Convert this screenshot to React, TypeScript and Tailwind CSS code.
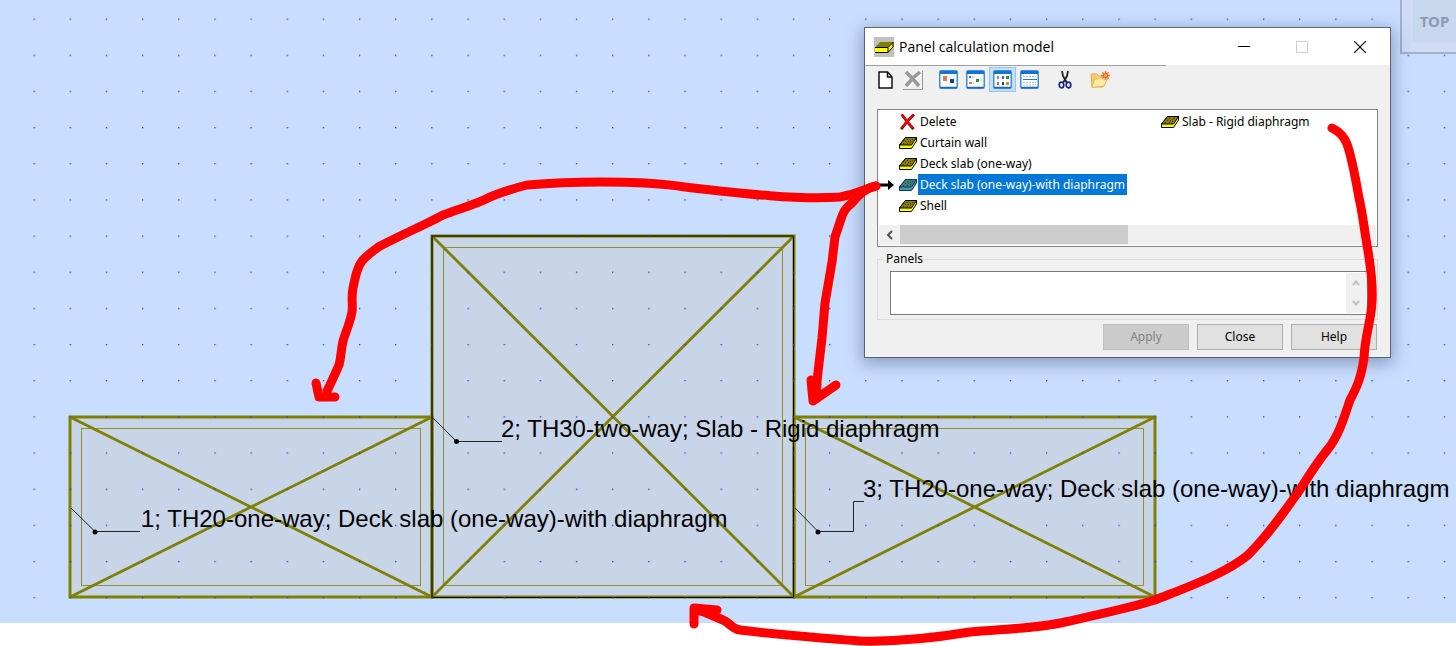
import React, { useState } from "react";
import clsx from "clsx";

type ModelItem = {
  name: string;
  kind: "delete" | "slab";
};

const columns: ModelItem[][] = [
  [
    { name: "Delete", kind: "delete" },
    { name: "Curtain wall", kind: "slab" },
    { name: "Deck slab (one-way)", kind: "slab" },
    { name: "Deck slab (one-way)-with diaphragm", kind: "slab" },
    { name: "Shell", kind: "slab" },
  ],
  [{ name: "Slab - Rigid diaphragm", kind: "slab" }],
];

const panels = [
  { x: 70, y: 417, w: 362, h: 180 },
  { x: 794, y: 417, w: 361, h: 180 },
  { x: 432, y: 236, w: 362, h: 361 },
];

const labels = [
  {
    text: "1; TH20-one-way; Deck slab (one-way)-with diaphragm",
    x: 141,
    y: 527,
    leader: "71,508 95,531.5 140,531.5",
    dot: [95, 532],
  },
  {
    text: "2; TH30-two-way; Slab - Rigid diaphragm",
    x: 501,
    y: 437,
    leader: "432,417 456.5,441.5 502,441.5",
    dot: [456.5, 441.5],
  },
  {
    text: "3; TH20-one-way; Deck slab (one-way)-with diaphragm",
    x: 863,
    y: 497,
    leader: "795,508 818,531.5 853.5,531.5 853.5,501.5 864,501.5",
    dot: [818, 532],
  },
];

const SlabIcon = ({ selected }: { selected?: boolean }) => (
  <svg width="18" height="12" viewBox="0 0 18 12" className="shrink-0">
    <path
      d="M6.500 .5h11v3.500l-5 7.500h-12v-3.500z"
      fill={selected ? "#4a98a0" : "#ffff00"}
      stroke={selected ? "#0b3a66" : "#000"}
    />
    <path
      d="M6.500 .5h11l-5 7.500h-12z"
      fill={selected ? "#407c72" : "#808000"}
      stroke={selected ? "#0b3a66" : "#000"}
    />
    <g fill={selected ? "#1d5060" : "#9a1500"} shapeRendering="crispEdges">
      <path d="M8 2h1v1h-1zM11 3h1v1h-1zM13 2h1v1h-1zM6 4h1v1h-1zM9 4h1v1h-1zM11 5h1v1h-1zM4 6h1v1h-1zM8 6h1v1h-1z" />
    </g>
  </svg>
);

const DeleteIcon = () => (
  <svg width="18" height="16" viewBox="0 0 18 16" className="shrink-0">
    <g fill="none" strokeLinecap="square">
      <path d="M3.500 1.500l4.500 6 5.500 6.500M14 1.500l-5 5-6 7.500" stroke="#800000" strokeWidth="2.800" />
      <path d="M3.500 1.500l4 5 5.500 6.500M13.500 1.500l-5 5-5 6.500" stroke="#ff0000" strokeWidth="1.600" />
    </g>
  </svg>
);

const TitleIcon = () => (
  <svg width="20" height="20" viewBox="0 0 20 20" className="shrink-0">
    <path d="M0 0h20v20h-20z" fill="#c0c0c0" />
    <path d="M6 5h13v5l-5 5.500h-13v-4.500z" fill="#ffff00" />
    <path d="M6 5h13l-5 5.500h-13z" fill="#808000" />
    <path d="M1 10.500h13l5-5M14 10.500v5" fill="none" stroke="#000" />
    <path d="M1 15.500h13l5-5.500v-5" fill="none" stroke="#000" />
  </svg>
);

const NewIcon = () => (
  <svg width="15" height="18" viewBox="0 0 15 18">
    <path d="M1 1h8.500l4.500 5v11h-13z" fill="#fff" stroke="#111" strokeWidth="1.500" />
    <path d="M9.500 1v5h4.500" fill="none" stroke="#111" strokeWidth="1.500" />
  </svg>
);

const ClearIcon = () => (
  <svg width="20" height="20" viewBox="0 0 20 20">
    <path d="M4 3l12 13M17 2.500l-6 6-8 8" stroke="#fff" strokeWidth="3" transform="translate(1 1)" />
    <path d="M3 2l6 6 7 8M17 2l-7 6-7 8" fill="none" stroke="#999" strokeWidth="3.500" />
    <path d="M0 19.500h19.500v-19" fill="none" stroke="#999" />
  </svg>
);

const ViewIcon = ({ children }: { children: React.ReactNode }) => (
  <svg width="19" height="19" viewBox="0 0 19 19">
    <rect x=".75" y=".75" width="17.500" height="17.500" rx="1.500" fill="#fff" stroke="#3b8ee0" strokeWidth="1.500" />
    <path d="M1 1h17v3h-17z" fill="#1672d0" />
    {children}
    <path d="M1 17.500h17" stroke="#1d66bb" strokeWidth="1.500" />
  </svg>
);

const ScissorsIcon = () => (
  <svg width="14" height="18" viewBox="0 0 14 18">
    <path d="M4 0l1 5 4 7M10 0l-1 5-4 7" fill="none" stroke="#222" strokeWidth="1.800" />
    <g fill="none" stroke="#20208c" strokeWidth="1.700">
      <ellipse cx="3.500" cy="14" rx="2.300" ry="2.800" />
      <ellipse cx="10.500" cy="14" rx="2.300" ry="2.800" />
    </g>
  </svg>
);

const FolderIcon = () => (
  <svg width="20" height="18" viewBox="0 0 20 18">
    <path d="M1 3h6l2 2h7v3l-3 8h-11z" fill="#f3cf70" stroke="#e0ae40" />
    <path d="M4.500 8h4l1.500-1.500h8l-4 8.500-12 1.500z" fill="#ffe9a5" stroke="#e6b750" />
    <path d="M15.500 0v9M11 4.500h9M12.300 1.300l6.400 6.400M18.700 1.300l-6.400 6.400" stroke="#f47a3a" strokeWidth="1.500" />
    <circle cx="15.500" cy="4.500" r="2" fill="#ffb35c" stroke="#f05a1a" />
  </svg>
);

const ToolButton = ({
  label,
  active,
  className,
  children,
}: {
  label: string;
  active?: boolean;
  className?: string;
  children: React.ReactNode;
}) => (
  <button
    aria-label={label}
    className={clsx(
      "flex h-[25px] w-[27px] items-center justify-center border",
      active ? "border-[#90c8f6] bg-[#c5def3]" : "border-transparent",
      className
    )}
  >
    {children}
  </button>
);

const Toolbar = () => (
  <div className="flex px-[7px] pt-px">
    <ToolButton label="New">
      <NewIcon />
    </ToolButton>
    <ToolButton label="Clear">
      <ClearIcon />
    </ToolButton>
    <ToolButton label="Large icons" className="ml-[9px]">
      <ViewIcon>
        <path d="M4 6h4v5h-4z" fill="#ee7440" />
        <path d="M11 9h4v4h-4z" fill="#123f9c" />
      </ViewIcon>
    </ToolButton>
    <ToolButton label="Small icons">
      <ViewIcon>
        <path d="M3 6h2v2h-2z" fill="#2f80e0" />
        <path d="M10 9h3v3h-3z" fill="#229a33" />
        <path d="M3 12h3v2h-3z" fill="#ee7440" />
        <path d="M6 7h3M14 10h2M7 13h2" stroke="#b7c2ce" />
      </ViewIcon>
    </ToolButton>
    <ToolButton label="List" active>
      <ViewIcon>
        <path d="M4 6h2v3h-2z" fill="#6f8fb4" />
        <path d="M9 6h2v3h-2z" fill="#5a4cc4" />
        <path d="M13 6h3v3h-3z" fill="#229a33" />
        <path d="M4 12h2v3h-2z" fill="#ee6330" />
        <path d="M9 12h2v3h-2z" fill="#123f9c" />
        <path d="M13 12h3v3h-3z" fill="#c79718" />
      </ViewIcon>
    </ToolButton>
    <ToolButton label="Details">
      <ViewIcon>
        <path d="M3 9.500h14" stroke="#1f78d0" />
        <path d="M3 6.500h13M3 12.500h13M3 15h13" stroke="#a9bdd2" strokeDasharray="2 1" />
      </ViewIcon>
    </ToolButton>
    <ToolButton label="Cut" className="ml-2">
      <ScissorsIcon />
    </ToolButton>
    <ToolButton label="Open" className="ml-2">
      <FolderIcon />
    </ToolButton>
  </div>
);

const ModelList = () => {
  const [selected, setSelected] = useState("Deck slab (one-way)-with diaphragm");

  return (
    <div className="border border-[#828790] bg-white p-px">
      <div className="flex h-[114px] overflow-hidden">
        {columns.map((items, i) => (
          <ul key={i} className="w-[262px] shrink-0">
            {items.map(({ name, kind }) => (
              <li key={name}>
                <button
                  className="flex h-[21px] items-center whitespace-nowrap"
                  onClick={() => setSelected(name)}
                >
                  <span className="flex w-5 shrink-0">
                    {selected === name && (
                      <svg width="16" height="12" viewBox="0 0 16 12">
                        <path d="M1 4.500h8v-3.500l6 5-6 5v-3.500h-8z" fill="#000" />
                      </svg>
                    )}
                  </span>
                  {kind === "delete" ? (
                    <DeleteIcon />
                  ) : (
                    <SlabIcon selected={selected === name} />
                  )}
                  <span
                    className={clsx(
                      "ml-px h-[21px] px-0.5 leading-[21px]",
                      selected === name && "bg-[#0078d7] text-white"
                    )}
                  >
                    {name}
                  </span>
                </button>
              </li>
            ))}
          </ul>
        ))}
      </div>
      <div className="flex h-5 bg-[#f0f0f0]">
        <button aria-label="Scroll left" className="flex w-[21px] items-center justify-center">
          <svg width="8" height="10" viewBox="0 0 8 10">
            <path d="M6 1l-4 4 4 4" fill="none" stroke="#505050" strokeWidth="2" />
          </svg>
        </button>
        <div className="h-[19px] w-[228px] bg-[#cdcdcd]" />
      </div>
    </div>
  );
};

const Dialog = () => (
  <section
    aria-labelledby="dialog-title"
    className="absolute top-[27px] right-[65px] w-[527px] border border-[#5c6472] bg-[#f0f0f0] pb-[7px] font-['Noto_Sans',sans-serif] text-[12px] text-black shadow-[0_4px_16px_2px_rgba(40,60,100,0.4)]"
  >
    <header className="flex h-[37px] items-center bg-white pr-px pl-[9px]">
      <TitleIcon />
      <h1 id="dialog-title" className="ml-[5px] flex-1 font-['Open_Sans',sans-serif] text-[14px]">
        Panel calculation model
      </h1>
      <button aria-label="Minimize" className="flex h-full w-[58px] items-center justify-center">
        <svg width="12" height="12" viewBox="0 0 12 12">
          <path d="M0 5.500h12" stroke="#000" />
        </svg>
      </button>
      <button
        aria-label="Maximize"
        disabled
        className="flex h-full w-[58px] items-center justify-center"
      >
        <svg width="12" height="12" viewBox="0 0 12 12">
          <path d="M.5.5h11v11h-11z" fill="none" stroke="#ccc" />
        </svg>
      </button>
      <button aria-label="Close window" className="flex h-full w-[58px] items-center justify-center">
        <svg width="12" height="12" viewBox="0 0 12 12">
          <path d="M0 0l12 12M12 0l-12 12" stroke="#000" strokeWidth="1.200" />
        </svg>
      </button>
    </header>
    <div className="h-px w-[301px] bg-[#a0a0a0]" />
    <Toolbar />
    <div className="px-3 pt-[17px]">
      <ModelList />
      <fieldset className="mt-1 border border-[#dcdcdc] pt-1 pr-[9px] pb-1 pl-3">
        <legend className="-ml-1.5 px-0.5 leading-4">
          <label htmlFor="panels">Panels</label>
        </legend>
        <div className="flex h-11 border border-[#7a7a7a] bg-white p-px">
          <textarea id="panels" className="block flex-1 resize-none outline-none" />
          <div className="flex w-5 flex-col bg-[#f0f0f0]">
            <button aria-label="Scroll up" className="flex flex-1 items-center justify-center">
              <svg width="8" height="6" viewBox="0 0 8 6">
                <path d="M1 5l3-3.500 3 3.500" fill="none" stroke="#bfbfbf" strokeWidth="2" />
              </svg>
            </button>
            <button aria-label="Scroll down" className="flex flex-1 items-center justify-center">
              <svg width="8" height="6" viewBox="0 0 8 6">
                <path d="M1 1l3 3.500 3-3.500" fill="none" stroke="#bfbfbf" strokeWidth="2" />
              </svg>
            </button>
          </div>
        </div>
      </fieldset>
      <div className="mt-1 flex justify-end gap-2 pr-px">
        <button
          disabled
          className="h-[26px] w-[86px] border border-[#bfbfbf] bg-[#cccccc] text-[#838383]"
        >
          Apply
        </button>
        <button className="h-[26px] w-[86px] border border-[#adadad] bg-[#e1e1e1]">Close</button>
        <button className="h-[26px] w-[86px] border border-[#adadad] bg-[#e1e1e1]">Help</button>
      </div>
    </div>
  </section>
);

const Drawing = () => (
  <svg className="absolute inset-0 h-full w-full">
    <defs>
      <pattern id="grid" x="33.500" y="18.500" width="36.160" height="36.160" patternUnits="userSpaceOnUse">
        <rect width="1.300" height="1.300" fill="#3030e8" />
      </pattern>
    </defs>
    {panels.map(({ x, y, w, h }) => (
      <rect key={x} x={x} y={y} width={w} height={h} fill="#c8d4e7" />
    ))}
    {panels.map(({ x, y, w, h }) => (
      <g key={x} fill="none" stroke="#808000">
        <rect x={x} y={y} width={w} height={h} strokeWidth="3" />
        <path d={`M${x} ${y}l${w} ${h}M${x + w} ${y}l${-w} ${h}`} strokeWidth="2.800" />
        <rect x={x + 11.5} y={y + 11.5} width={w - 23} height={h - 23} strokeOpacity=".8" />
      </g>
    ))}
    <path d="M432 598v-362h362" fill="none" stroke="#2b2b00" strokeWidth="1.600" />
    <path d="M432 597.500h361.500v-361" fill="none" stroke="#000" />
    <rect width="100%" height="100%" fill="url(#grid)" />
    {labels.map(({ text, x, y, leader, dot }) => (
      <g key={text}>
        <polyline points={leader} fill="none" stroke="#222" />
        <circle cx={dot[0]} cy={dot[1]} r="2.500" />
        <text x={x} y={y} className="font-['Liberation_Sans',sans-serif] text-[24px]">
          {text}
        </text>
      </g>
    ))}
  </svg>
);

// Freehand arrows from the list entries to the panels they are assigned to
const Markup = () => (
  <svg className="pointer-events-none absolute inset-0 h-full w-full">
    <g fill="none" stroke="#ff0000" strokeWidth="9" strokeLinecap="round" strokeLinejoin="round">
      <path d="M876 186C860 190 858 194 840 197C800 200 745 194 685 187C655 182 625 182 600 182C575 182 550 183 527 185C515 188 500 193 490 197C475 205 458 209 443 215C430 222 425 224 417 228C404 234 392 240 380 246C373 251 367 255 362 261C356 269 355 279 353 288C351 297 353 304 352 312C350 323 346 331 343 341C341 350 341 358 339 365C335 374 332 381 327 391" />
      <path d="M316 383L319 397H335" />
      <path d="M876 186C866 188 860 193 852 203C845 208 843 213 841 219L835 237L832 262L825 303L822 338L818 372L816 392" />
      <path d="M811 380L813 401L836 385M811 380L817 385L815 396" />
      <path d="M1332 128C1338 131 1344 136 1347 144C1352 158 1355 175 1359 198C1363 215 1364 228 1367 245C1370 262 1373 285 1372 302C1371 322 1365 335 1364 358C1361 378 1357 387 1350 400C1344 418 1339 435 1328 449C1318 461 1310 474 1301 488C1287 508 1270 533 1248 555C1225 574 1185 588 1155 600C1130 608 1095 615 1065 622C1035 629 1000 629 970 632C940 637 900 642 860 641C820 638 780 635 740 630C732 629 730 623 723 620L697 609" />
      <path d="M694 624V608L717 610M700 611L712 612" />
    </g>
  </svg>
);

const App = () => {
  return (
    <main className="relative flex h-screen flex-col overflow-hidden bg-white">
      <div className="relative flex-1 overflow-hidden bg-[#c9deff]">
        <Drawing />
        <div className="absolute top-0 right-0 h-[54px] w-14 border-b-2 border-l-2 border-[#a3b1cb] bg-[#d0dcf6] pl-[11px]">
          <button className="flex h-[42px] w-full items-center justify-center bg-[#c6d7ee] font-['Noto_Sans',sans-serif] text-[15px] font-bold text-[#8c9bb0]">
            TOP
          </button>
        </div>
        <Dialog />
      </div>
      <div className="h-[23px] shrink-0 bg-white" />
      <Markup />
    </main>
  );
};

export default App;
